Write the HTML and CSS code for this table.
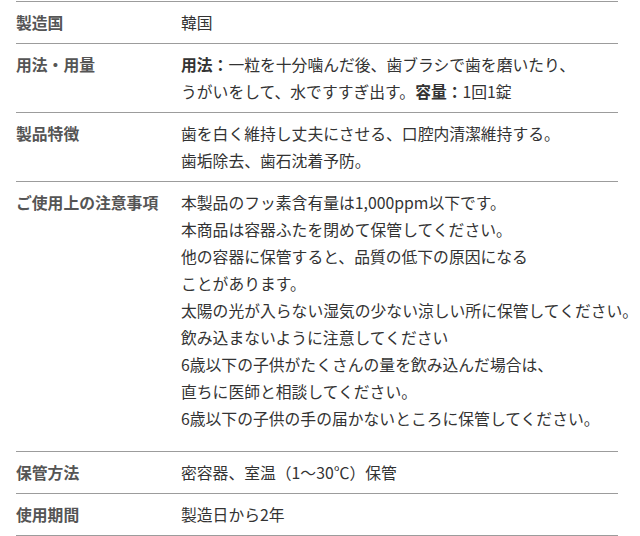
FILE: index.html
```html
<!DOCTYPE html>
<html lang="ja">
<head>
<meta charset="utf-8">
<title>商品情報</title>
<link rel="stylesheet" href="styles.css">
</head>
<body>
<div class="spec">
  <div class="row">
    <div class="label">製造国</div>
    <div class="value">韓国</div>
  </div>
  <div class="row">
    <div class="label">用法・用量</div>
    <div class="value"><b>用法：</b>一粒を十分噛んだ後、歯ブラシで歯を磨いたり、<br>うがいをして、水ですすぎ出す。<b>容量：</b>1回1錠</div>
  </div>
  <div class="row">
    <div class="label">製品特徴</div>
    <div class="value">歯を白く維持し丈夫にさせる、口腔内清潔維持する。<br>歯垢除去、歯石沈着予防。</div>
  </div>
  <div class="row row-notes">
    <div class="label">ご使用上の注意事項</div>
    <div class="value">本製品のフッ素含有量は1,000ppm以下です。<br>本商品は容器ふたを閉めて保管してください。<br>他の容器に保管すると、品質の低下の原因になる<br>ことがあります。<br>太陽の光が入らない湿気の少ない涼しい所に保管してください。<br>飲み込まないように注意してください<br>6歳以下の子供がたくさんの量を飲み込んだ場合は、<br>直ちに医師と相談してください。<br>6歳以下の子供の手の届かないところに保管してください。</div>
  </div>
  <div class="row">
    <div class="label">保管方法</div>
    <div class="value">密容器、室温（1〜30℃）保管</div>
  </div>
  <div class="row">
    <div class="label">使用期間</div>
    <div class="value">製造日から2年</div>
  </div>
</div>
</body>
</html>
```

FILE: styles.css
```css
html, body {
  margin: 0;
  padding: 0;
  background: #ffffff;
}

body {
  font-family: "Noto Sans CJK JP", "Noto Sans", sans-serif;
  font-size: 15.8px;
  line-height: 27px;
  color: #333333;
}

.spec {
  width: 602px;
  margin: 1px 0 0 16px;
  border-bottom: 1px solid #9c9c9c;
}

.row {
  display: grid;
  grid-template-columns: 165px 1fr;
  border-top: 1px solid #9c9c9c;
  padding: 7px 0;
}

.row-notes {
  padding-bottom: 19px;
}

.label {
  font-weight: 700;
  color: #555555;
  white-space: nowrap;
}

.value {
  white-space: nowrap;
}

.value b {
  font-weight: 700;
  color: #333333;
}
```
